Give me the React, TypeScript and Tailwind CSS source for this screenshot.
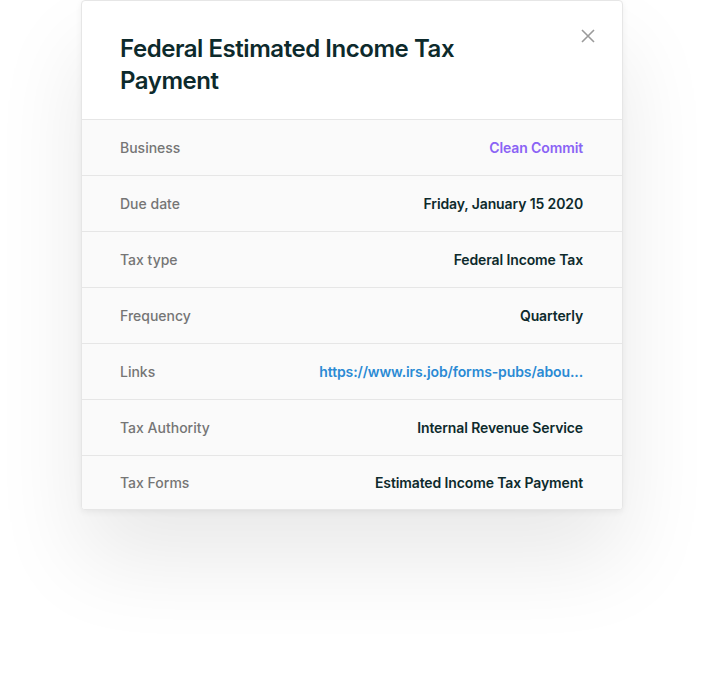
import React from "react";

const rows: { label: string; value: string; kind?: "purple" | "link" }[] = [
  { label: "Business", value: "Clean Commit", kind: "purple" },
  { label: "Due date", value: "Friday, January 15 2020" },
  { label: "Tax type", value: "Federal Income Tax" },
  { label: "Frequency", value: "Quarterly" },
  { label: "Links", value: "https://www.irs.job/forms-pubs/abou...", kind: "link" },
  { label: "Tax Authority", value: "Internal Revenue Service" },
  { label: "Tax Forms", value: "Estimated Income Tax Payment" },
];

export default function App() {
  return (
    <div
      className="min-h-[690px] w-full bg-white flex justify-center items-start"
      style={{ fontFamily: "Inter, 'Noto Sans', sans-serif" }}
    >
      <div className="w-[542px] bg-white border border-[#e6e6e6] rounded-[4px] overflow-hidden shadow-[0_50px_90px_rgba(0,0,0,0.09),0_2px_6px_rgba(0,0,0,0.06)] flex flex-col">
        <div className="relative h-[118px] shrink-0 pl-[38px] pr-10 pt-[32px]">
          <h1 className="text-[24px] leading-[32px] font-semibold text-[#0d2a2c] tracking-[-0.45px]">
            Federal Estimated Income Tax
            <br />
            Payment
          </h1>
          <button className="absolute right-[27px] top-[28px] w-[14px] h-[14px] flex items-center justify-center">
            <svg width="14" height="14" viewBox="0 0 14 14" fill="none">
              <path d="M1 1L13 13M13 1L1 13" stroke="#9a9a9a" strokeWidth="1.6" />
            </svg>
          </button>
        </div>
        <div className="bg-[#fafafa] flex flex-col">
          {rows.map((r, i) => (
            <div
              key={r.label}
              className={
                (i === rows.length - 1 ? "h-[54px] " : "h-[56px] ") +
                "shrink-0 border-t border-[#e6e6e6] flex items-center justify-between pl-[38px] pr-[39px] text-[14px]"
              }
            >
              <span className="font-medium text-[#757575]">{r.label}</span>
              <span
                className={
                  "font-semibold tracking-[-0.12px] " +
                  (r.kind === "purple"
                    ? "text-[#8a63f5]"
                    : r.kind === "link"
                    ? "text-[#2a8ad4]"
                    : "text-[#0d2a2c]")
                }
              >
                {r.value}
              </span>
            </div>
          ))}
        </div>
      </div>
    </div>
  );
}
